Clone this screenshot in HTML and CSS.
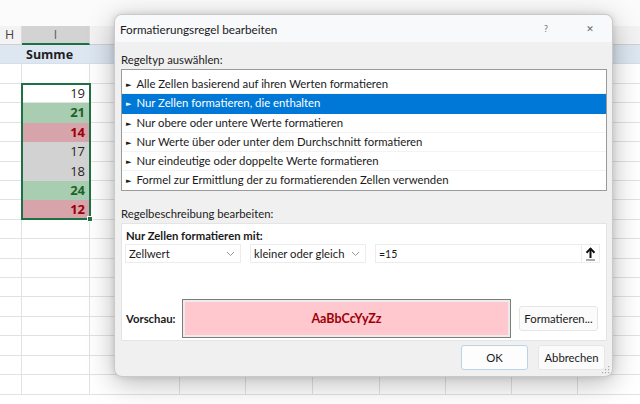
FILE: index.html
```html
<!DOCTYPE html>
<html lang="de">
<head>
<meta charset="utf-8">
<link rel="stylesheet" href="styles.css">
</head>
<body>
<div class="sheet">
  <div class="topbar"></div>
  <div class="row colhdr">
    <div class="c w1">H</div><div class="c w2 sel">I</div><div class="c w3"></div><div class="c w4"></div><div class="c w5"></div><div class="c w6"></div><div class="c w7"></div><div class="c w8"></div><div class="c w9"></div><div class="c w10"></div>
  </div>
  <div class="row head">
    <div class="c w1"></div><div class="c w2 title">Summe</div><div class="c w3"></div><div class="c w4"></div><div class="c w5"></div><div class="c w6"></div><div class="c w7"></div><div class="c w8"></div><div class="c w9"></div><div class="c w10"></div>
  </div>
  <div class="row"><div class="c w1"></div><div class="c w2"></div><div class="c w3"></div><div class="c w4"></div><div class="c w5"></div><div class="c w6"></div><div class="c w7"></div><div class="c w8"></div><div class="c w9"></div><div class="c w10"></div></div>
  <div class="row"><div class="c w1"></div><div class="c w2 num">19</div><div class="c w3"></div><div class="c w4"></div><div class="c w5"></div><div class="c w6"></div><div class="c w7"></div><div class="c w8"></div><div class="c w9"></div><div class="c w10"></div></div>
  <div class="row"><div class="c w1"></div><div class="c w2 num good">21</div><div class="c w3"></div><div class="c w4"></div><div class="c w5"></div><div class="c w6"></div><div class="c w7"></div><div class="c w8"></div><div class="c w9"></div><div class="c w10"></div></div>
  <div class="row"><div class="c w1"></div><div class="c w2 num bad">14</div><div class="c w3"></div><div class="c w4"></div><div class="c w5"></div><div class="c w6"></div><div class="c w7"></div><div class="c w8"></div><div class="c w9"></div><div class="c w10"></div></div>
  <div class="row"><div class="c w1"></div><div class="c w2 num mid">17</div><div class="c w3"></div><div class="c w4"></div><div class="c w5"></div><div class="c w6"></div><div class="c w7"></div><div class="c w8"></div><div class="c w9"></div><div class="c w10"></div></div>
  <div class="row"><div class="c w1"></div><div class="c w2 num mid">18</div><div class="c w3"></div><div class="c w4"></div><div class="c w5"></div><div class="c w6"></div><div class="c w7"></div><div class="c w8"></div><div class="c w9"></div><div class="c w10"></div></div>
  <div class="row"><div class="c w1"></div><div class="c w2 num good">24</div><div class="c w3"></div><div class="c w4"></div><div class="c w5"></div><div class="c w6"></div><div class="c w7"></div><div class="c w8"></div><div class="c w9"></div><div class="c w10"></div></div>
  <div class="row"><div class="c w1"></div><div class="c w2 num bad">12</div><div class="c w3"></div><div class="c w4"></div><div class="c w5"></div><div class="c w6"></div><div class="c w7"></div><div class="c w8"></div><div class="c w9"></div><div class="c w10"></div></div>
  <div class="row"><div class="c w1"></div><div class="c w2"></div><div class="c w3"></div><div class="c w4"></div><div class="c w5"></div><div class="c w6"></div><div class="c w7"></div><div class="c w8"></div><div class="c w9"></div><div class="c w10"></div></div>
  <div class="row"><div class="c w1"></div><div class="c w2"></div><div class="c w3"></div><div class="c w4"></div><div class="c w5"></div><div class="c w6"></div><div class="c w7"></div><div class="c w8"></div><div class="c w9"></div><div class="c w10"></div></div>
  <div class="row"><div class="c w1"></div><div class="c w2"></div><div class="c w3"></div><div class="c w4"></div><div class="c w5"></div><div class="c w6"></div><div class="c w7"></div><div class="c w8"></div><div class="c w9"></div><div class="c w10"></div></div>
  <div class="row"><div class="c w1"></div><div class="c w2"></div><div class="c w3"></div><div class="c w4"></div><div class="c w5"></div><div class="c w6"></div><div class="c w7"></div><div class="c w8"></div><div class="c w9"></div><div class="c w10"></div></div>
  <div class="row"><div class="c w1"></div><div class="c w2"></div><div class="c w3"></div><div class="c w4"></div><div class="c w5"></div><div class="c w6"></div><div class="c w7"></div><div class="c w8"></div><div class="c w9"></div><div class="c w10"></div></div>
  <div class="row"><div class="c w1"></div><div class="c w2"></div><div class="c w3"></div><div class="c w4"></div><div class="c w5"></div><div class="c w6"></div><div class="c w7"></div><div class="c w8"></div><div class="c w9"></div><div class="c w10"></div></div>
  <div class="row"><div class="c w1"></div><div class="c w2"></div><div class="c w3"></div><div class="c w4"></div><div class="c w5"></div><div class="c w6"></div><div class="c w7"></div><div class="c w8"></div><div class="c w9"></div><div class="c w10"></div></div>
  <div class="row"><div class="c w1"></div><div class="c w2"></div><div class="c w3"></div><div class="c w4"></div><div class="c w5"></div><div class="c w6"></div><div class="c w7"></div><div class="c w8"></div><div class="c w9"></div><div class="c w10"></div></div>
  <div class="row"><div class="c w1"></div><div class="c w2"></div><div class="c w3"></div><div class="c w4"></div><div class="c w5"></div><div class="c w6"></div><div class="c w7"></div><div class="c w8"></div><div class="c w9"></div><div class="c w10"></div></div>
  <div class="selbox"><span class="handle"></span></div>
</div>

<div class="dialog">
  <div class="titlebar">
    <span class="dtitle">Formatierungsregel bearbeiten</span>
    <span class="tb-help">?</span>
    <span class="tb-close">✕</span>
  </div>
  <div class="dbody">
    <div class="label">Regeltyp auswählen:</div>
    <div class="list">
      <div class="item"><span class="arr">►</span>Alle Zellen basierend auf ihren Werten formatieren</div>
      <div class="item active"><span class="arr">►</span>Nur Zellen formatieren, die enthalten</div>
      <div class="item"><span class="arr">►</span>Nur obere oder untere Werte formatieren</div>
      <div class="item"><span class="arr">►</span>Nur Werte über oder unter dem Durchschnitt formatieren</div>
      <div class="item"><span class="arr">►</span>Nur eindeutige oder doppelte Werte formatieren</div>
      <div class="item"><span class="arr">►</span>Formel zur Ermittlung der zu formatierenden Zellen verwenden</div>
    </div>
    <div class="label label2">Regelbeschreibung bearbeiten:</div>
    <div class="panel">
      <div class="ptitle">Nur Zellen formatieren mit:</div>
      <div class="fields">
        <div class="combo"><span>Zellwert</span><svg width="9" height="6" viewBox="0 0 9 6"><polyline points="1,1 4.5,4.5 8,1" fill="none" stroke="#9a9a9a" stroke-width="1"/></svg></div>
        <div class="combo"><span>kleiner oder gleich</span><svg width="9" height="6" viewBox="0 0 9 6"><polyline points="1,1 4.5,4.5 8,1" fill="none" stroke="#9a9a9a" stroke-width="1"/></svg></div>
        <div class="textf"><span>=15</span><span class="refbtn"><svg width="11" height="14" viewBox="0 0 11 14"><path d="M5.5 1.5 V11" stroke="#111" stroke-width="2" fill="none"/><path d="M1.5 5.8 L5.5 1.6 L9.5 5.8" stroke="#111" stroke-width="2" fill="none"/><path d="M1 13 H10" stroke="#555" stroke-width="1"/></svg></span></div>
      </div>
      <div class="prow">
        <span class="plabel">Vorschau:</span>
        <div class="preview"><div class="pinner">AaBbCcYyZz</div></div>
        <button class="btn fmt">Formatieren...</button>
      </div>
    </div>
    <div class="actions">
      <button class="btn ok">OK</button>
      <button class="btn">Abbrechen</button>
    </div>
  </div>
  <svg class="grip" width="8" height="8" viewBox="0 0 8 8"><g fill="#a8a8a8"><rect x="6" y="0" width="1.2" height="1.2"/><rect x="3" y="3" width="1.2" height="1.2"/><rect x="6" y="3" width="1.2" height="1.2"/><rect x="0" y="6" width="1.2" height="1.2"/><rect x="3" y="6" width="1.2" height="1.2"/><rect x="6" y="6" width="1.2" height="1.2"/></g></svg>
</div>
</body>
</html>
```
FILE: styles.css
```css
* { box-sizing: border-box; }
html, body { margin: 0; padding: 0; }
body {
  width: 640px;
  height: 404px;
  overflow: hidden;
  position: relative;
  background: #fff;
  font-family: "Lato", "Noto Sans", sans-serif;
}

/* ---------- spreadsheet ---------- */
.sheet {
  position: relative;
  width: 640px;
  font-family: "Open Sans", "Liberation Sans", sans-serif;
  color: #1f1f1f;
}
.topbar { height: 26px; background: #fbfbfb; }
.row { display: flex; height: 19.43px; }
.c {
  height: 100%;
  border-right: 1px solid #e2e2e2;
  border-bottom: 1px solid #e2e2e2;
  font-size: 13px;
  line-height: 19px;
  white-space: nowrap;
  overflow: hidden;
}
.w1 { width: 22px; }
.w2 { width: 68px; }
.w3 { width: 90px; }
.w4 { width: 66px; }
.w5 { width: 67px; }
.w6 { width: 67px; }
.w7 { width: 66px; }
.w8 { width: 66px; }
.w9 { width: 66px; }
.w10 { width: 62px; border-right: none; }

.colhdr { height: 19px; background: #f3f3f3; }
.colhdr .c {
  font-size: 12px;
  line-height: 18px;
  text-align: center;
  color: #444;
  border-right-color: #dadada;
  border-bottom: 1px solid #d0d0d0;
}
.colhdr .w1 { text-align: left; padding-left: 5px; font-size: 12.5px; }
.colhdr .sel {
  background: #d3d3d3;
  border-bottom: 2px solid #1e7145;
  color: #5a5a5a;
}
.head { background: #dde7f2; }
.head .c { border-color: #dde7f2; border-bottom-color: #d6dfe9; }
.head .title { font-weight: 700; padding-left: 4px; font-size: 12.5px; line-height: 20px; }

.num { text-align: right; padding-right: 4px; }
.good { background: #a9cdb1; color: #1b6428; font-weight: 700; border-bottom-color: #a9cdb1; }
.bad { background: #d6a4aa; color: #9c0006; font-weight: 700; border-bottom-color: #d6a4aa; }
.mid { background: #d2d2d2; border-bottom-color: #d2d2d2; }

.selbox {
  position: absolute;
  left: 21px;
  top: 82.5px;
  width: 70px;
  height: 137px;
  border: 2px solid #1e7145;
}
.handle {
  position: absolute;
  right: -4px;
  bottom: -4px;
  width: 6px;
  height: 6px;
  background: #1e7145;
  border: 1px solid #fff;
}

/* ---------- dialog ---------- */
.dialog {
  position: absolute;
  left: 114px;
  top: 14px;
  width: 499px;
  height: 363px;
  background: #f0f0f0;
  border: 1px solid #c9c9c9;
  border-radius: 8px;
  box-shadow: 0 6px 28px rgba(0, 0, 0, 0.28), 0 0 6px rgba(0, 0, 0, 0.12);
  overflow: hidden;
  color: #1a1a1a;
}
.titlebar {
  height: 27px;
  display: flex;
  align-items: center;
  padding-left: 5px;
  background: #f8f9fa;
}
.dtitle { font-size: 11.7px; flex: 1; }
.tb-help { font-size: 8px; color: #666; width: 44px; text-align: center; font-family: "Noto Sans", sans-serif; }
.tb-close { font-size: 9px; color: #666; width: 44px; text-align: center; font-family: "DejaVu Sans", sans-serif; }

.dbody { padding: 0 5px 0 6px; }
.label { font-size: 11.3px; height: 27px; line-height: 14px; padding-top: 11px; color: #222; }
.list {
  height: 122px;
  background: #fff;
  border: 1px solid #9a9a9a;
  padding-top: 5px;
}
.item {
  height: 19.3px;
  line-height: 18px;
  font-size: 11.35px;
  padding-left: 4px;
  border-bottom: 1px solid #f3f3f3;
  white-space: nowrap;
}
.item:last-child { border-bottom: none; }
.item.active { background: #0078d7; color: #fff; border-bottom-color: #0078d7; }
.arr { font-family: "DejaVu Sans", sans-serif; font-size: 7px; margin-right: 5px; position: relative; top: -1px; }

.label2 { height: 32px; padding-top: 16px; }
.panel {
  height: 118px;
  background: #fff;
  border: 1px solid #e4e4e4;
  padding: 5px 0 0 3px;
}
.ptitle { font-size: 11.3px; font-weight: 700; height: 14px; line-height: 14px; padding-left: 1px; }
.fields { display: flex; gap: 9px; margin-top: 1px; height: 19px; }
.combo, .textf {
  height: 19px;
  border: 1px solid #ececec;
  background: #fff;
  display: flex;
  align-items: center;
  font-size: 11.3px;
  padding-left: 3px;
}
.combo { width: 116px; justify-content: space-between; padding-right: 5px; }
.textf { width: 225px; justify-content: space-between; font-size: 10.5px; }
.refbtn {
  width: 18px;
  height: 17px;
  display: flex;
  align-items: center;
  justify-content: center;
  border-left: 1px solid #ececec;
}
.prow {
  display: flex;
  align-items: center;
  margin-top: 36px;
  height: 39px;
}
.plabel { font-size: 11.3px; font-weight: 700; width: 57px; padding-left: 1px; }
.preview {
  width: 329px;
  height: 39px;
  border: 1px solid #7d7d7d;
  padding: 2px;
  background: #ececec;
}
.pinner {
  height: 100%;
  background: #ffc7ce;
  color: #9c0006;
  font-weight: 700;
  font-size: 12.5px;
  display: flex;
  align-items: center;
  justify-content: center;
}
.btn {
  font-family: "Lato", "Noto Sans", sans-serif;
  font-size: 11.3px;
  color: #1a1a1a;
  background: #fbfbfb;
  border: 1px solid #e6e6e6;
  border-radius: 3px;
  padding: 0;
  height: 25px;
}
.fmt { width: 79px; margin-left: 8px; }
.actions {
  display: flex;
  justify-content: flex-end;
  gap: 10px;
  margin-top: 4px;
  padding-right: 2px;
}
.actions .btn { width: 67px; }
.actions .ok { border-color: #b9d3e8; background: #fdfdfd; }
.grip { position: absolute; right: 2px; bottom: 2px; }
```
